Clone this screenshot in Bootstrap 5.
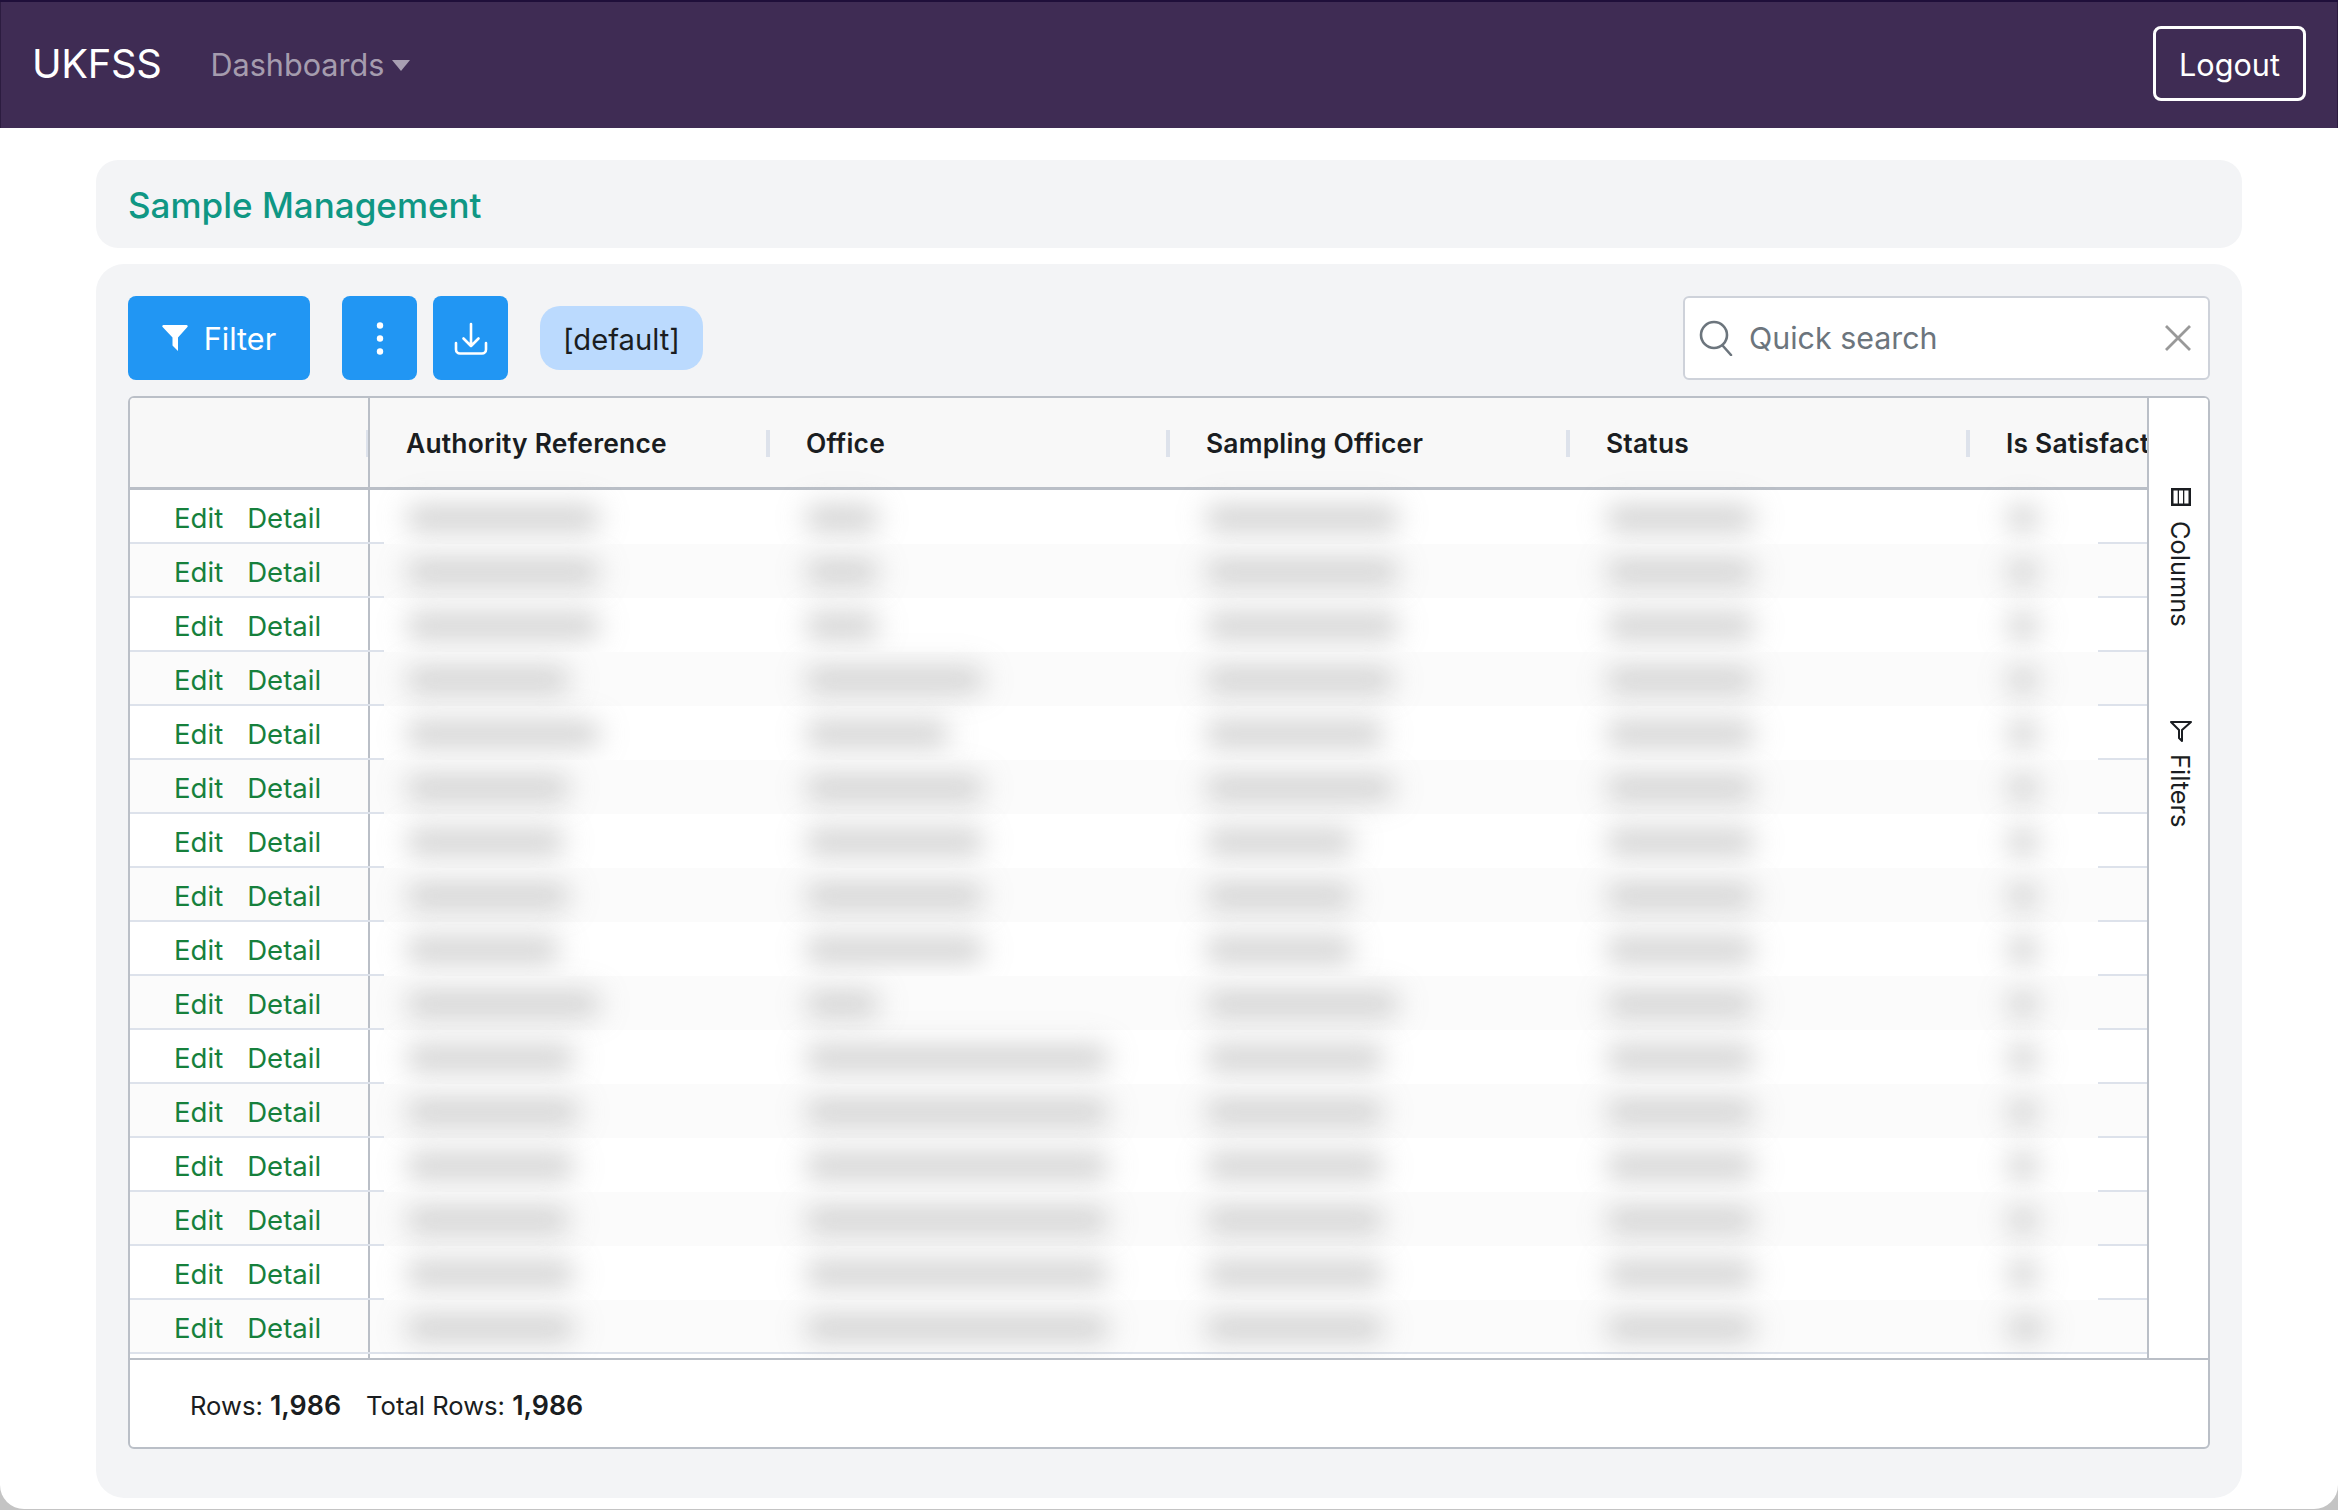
<!DOCTYPE html>
<html lang="en"><head><meta charset="utf-8"><title>UKFSS</title>
<link href="https://cdn.jsdelivr.net/npm/bootstrap@5.3.0/dist/css/bootstrap.min.css" rel="stylesheet">
<style>
html,body{margin:0;background:#c4c4c4;width:2338px;height:1510px;overflow:hidden}
body{font-family:Inter,"Liberation Sans",sans-serif;font-size:27.6px;color:#1a1d21}
.app-shell{width:2338px;height:1509px;background:#fff;border-radius:0 0 24px 24px;overflow:hidden}
.top-bar{height:128px;background:#3f2c54;border-top:2px solid #1f0f3a;padding:0 32px 3px 32px;box-shadow:inset 1px 0 #2c1c40,inset -1px 0 #2c1c40}
.brand-name{font-size:39.8px;color:#fff;text-decoration:none;margin-right:49px;letter-spacing:-.3px;line-height:1}
.dash-link{font-size:30.6px;color:rgba(255,255,255,.55);text-decoration:none;padding-top:3px}
.dash-link::after{content:"";display:inline-block;margin-left:8px;vertical-align:5px;border-top:11px solid;border-left:9px solid transparent;border-right:9px solid transparent}
.logout-btn{width:153px;height:75px;border:3px solid #fff;border-radius:8px;color:#fff;font-size:30.6px;padding:2px 0 0;background:transparent}
.page-wrap{padding:32px 96px 0}
.title-panel{height:88px;background:#f3f4f6;border-radius:22px;padding:2px 32px 0}
.title-text{font-size:35px;font-weight:500;color:#0f9784;margin:0}
.main-panel{height:1234px;margin-top:16px;background:#f3f4f6;border-radius:28px;padding:32px}
.tool-btn{height:84px;background:#2196f3;border:0;border-radius:8px;color:#fff;padding:0;font-size:30.6px}
.filter-btn{width:182px;margin-right:32px}
.square-btn{width:75px;margin-right:16px}
.square-end{margin-right:32px}
.preset-pill{width:163px;height:64px;background:#bbdafe;border-radius:20px;font-size:29.2px;color:#1a1d21;padding-top:3px}
.search-box{width:527px;height:84px;background:#fff;border:2px solid #ced2da;border-radius:6px;padding:0 16px 0 14px;font-size:30.4px;color:#6c757d}
.lift-text{padding-top:2px}
.grid-box{height:1053px;margin-top:16px;background:#fff;border:2px solid #babfc7;border-radius:6px;overflow:hidden}
.grid-main{height:960px;flex:none}
.grid-cols{width:2017px;flex:none;overflow:hidden}
.head-row{height:92px;background:#f8f8f8;border-bottom:3px solid #babfc7}
.head-pin{width:240px;flex:none;border-right:2px solid #babfc7;position:relative}
.head-cell{width:400px;flex:none;padding:3px 0 0 36px;font-weight:600;font-size:26.4px;letter-spacing:.2px;white-space:nowrap;position:relative;align-self:stretch;display:flex;align-items:center}
.resize-mark{position:absolute;right:0;top:32px;width:4px;height:27px;background:#dde2eb}
.head-pin .resize-mark{right:0;width:2px}
.data-row{height:54px}
.pin-seg{width:254px;flex:none;border-bottom:2px solid #dde2eb}
.pin-cell{width:240px;height:100%;border-right:2px solid #babfc7;padding:5px 0 0 44px;gap:24px}
.action-link{color:#16803c;text-decoration:none}
.blur-seg{width:1714px;flex:none;position:relative;overflow:visible}
.end-seg{flex:1;border-bottom:2px solid #dde2eb}
.zebra{background:#fbfbfb}
.smear{position:absolute;top:17px;height:22px;background:#d2d2d2;filter:blur(12px);border-radius:10px;box-shadow:0 0 24px 14px rgba(0,0,0,.03)}
.last-row .blur-seg{border-bottom:2px solid #dde2eb}
.grid-tail{height:4px}
.tail-pin{width:240px;height:100%;border-right:2px solid #babfc7}
.side-rail{flex:1;border-left:2px solid #babfc7;padding:90px 0 0 20px;font-size:25.4px;background:#fff}
.rail-btn{width:24px;display:flex;flex-direction:column;align-items:center}
.rail-label{writing-mode:vertical-rl;line-height:24px;white-space:nowrap;margin-right:3px}
.rail-cols{gap:15px}
.rail-filt{gap:11px;margin-top:94px}
.grid-foot{height:89px;flex:none;border-top:2px solid #babfc7;padding:3px 0 0 60px;font-size:25.6px}
.foot-gap{margin-left:25px}
.foot-num{font-weight:600;font-size:26.8px}
</style></head><body>
<div class="app-shell">
<nav class="top-bar d-flex align-items-center">
<a class="brand-name" href="#">UKFSS</a>
<a class="dash-link" href="#">Dashboards</a>
<button class="logout-btn ms-auto" type="button">Logout</button>
</nav>
<div class="page-wrap">
<div class="title-panel d-flex align-items-center"><h1 class="title-text">Sample Management</h1></div>
<div class="main-panel">
<div class="d-flex align-items-center">
<button class="tool-btn filter-btn d-flex align-items-center justify-content-center gap-3" type="button">
<svg width="26" height="26" viewBox="0 0 26 26"><path d="M1.500 0h23a1.200 1.200 0 0 1 .9 2L16 12.500V26l-5.500-5.500v-8L.6 2A1.200 1.200 0 0 1 1.500 0z" fill="#fff"/></svg><span class="lift-text">Filter</span></button>
<button class="tool-btn square-btn d-flex align-items-center justify-content-center" type="button" aria-label="More">
<svg width="8" height="33" viewBox="0 0 8 33" fill="#fff"><circle cx="4" cy="3.500" r="3.200"/><circle cx="4" cy="16.500" r="3.200"/><circle cx="4" cy="29.500" r="3.200"/></svg></button>
<button class="tool-btn square-btn square-end d-flex align-items-center justify-content-center" type="button" aria-label="Download">
<svg width="34" height="33" viewBox="0 0 34 33" fill="none" stroke="#fff" stroke-width="2.6" stroke-linecap="round" stroke-linejoin="round"><path d="M17 2v22M9.500 16.500 17 24l7.500-7.500"/><path d="M2 21v6.500a4 4 0 0 0 4 4h22a4 4 0 0 0 4-4V21"/></svg></button>
<div class="preset-pill d-flex align-items-center justify-content-center">[default]</div>
<div class="search-box ms-auto d-flex align-items-center">
<svg width="34" height="36" viewBox="0 0 34 36" fill="none" stroke="#6c757d" stroke-width="2.600" stroke-linecap="round"><circle cx="15" cy="15" r="13"/><path d="M24 26l8 9"/></svg>
<span class="ms-3 flex-grow-1 lift-text">Quick search</span>
<svg width="28" height="28" viewBox="0 0 28 28" fill="none" stroke="#999" stroke-width="2.800"><path d="M2 2l24 24M26 2L2 26"/></svg>
</div>
</div>
<div class="grid-box d-flex flex-column">
<div class="grid-main d-flex">
<div class="grid-cols">
<div class="head-row d-flex">
<div class="head-pin"><span class="resize-mark"></span></div>
<div class="head-cell"><span class="resize-mark"></span>Authority Reference</div>
<div class="head-cell"><span class="resize-mark"></span>Office</div>
<div class="head-cell"><span class="resize-mark"></span>Sampling Officer</div>
<div class="head-cell"><span class="resize-mark"></span>Status</div>
<div class="head-cell">Is Satisfactory</div>
</div>
<div id="rows"></div>
<div class="grid-tail"><div class="tail-pin"></div></div>
</div>
<div class="side-rail">
<div class="rail-btn rail-cols">
<svg width="20" height="18" viewBox="0 0 20 18"><path d="M0 0h20v18H0zM2.500 2.500v13h4.200v-13zM8 2.500v13h4v-13zM13.300 2.500v13h4.200v-13z" fill="#1a1d21" fill-rule="evenodd"/></svg><span class="rail-label">Columns</span></div>
<div class="rail-btn rail-filt">
<svg width="22" height="22" viewBox="0 0 22 22" fill="none" stroke="#1a1d21" stroke-width="2"><path d="M1 1h20l-9 8v11l-3-3V9z" stroke-linejoin="round"/></svg><span class="rail-label">Filters</span></div>
</div>
</div>
<div class="grid-foot d-flex align-items-center"><span>Rows: <span class="foot-num">1,986</span></span><span class="foot-gap">Total Rows: <span class="foot-num">1,986</span></span></div>
</div>
</div>
</div>
</div>
<script>
var rows=[[190,70,190],[190,70,190],[190,70,190],[160,175,185],[190,140,175],[160,175,185],[155,175,145],[160,175,145],[150,175,145],[190,70,190],[165,300,175],[170,300,175],[165,300,175],[160,300,175],[165,300,175],[165,300,175]];
var cols=[24,423,823,1224,1625];
var html='';
rows.forEach(function(r,i){
 var z=i%2?' zebra':'';
 var b='<div class="data-row d-flex'+(i==15?' last-row':'')+'"><div class="pin-seg'+z+'"><div class="pin-cell d-flex align-items-center"><a class="action-link" href="#">Edit</a><a class="action-link" href="#">Detail</a></div></div><div class="blur-seg'+z+'">';
 var w=[r[0],r[1],r[2],145,i==15?34:28];
 w.forEach(function(v,k){b+='<span class="smear" style="left:'+cols[k]+'px;width:'+v+'px"></span>'});
 b+='</div><div class="end-seg'+z+'"></div></div>';
 html+=b;
});
document.getElementById('rows').innerHTML=html;
</script>
<script src="https://cdn.jsdelivr.net/npm/bootstrap@5.3.0/dist/js/bootstrap.bundle.min.js"></script>
</body></html>
